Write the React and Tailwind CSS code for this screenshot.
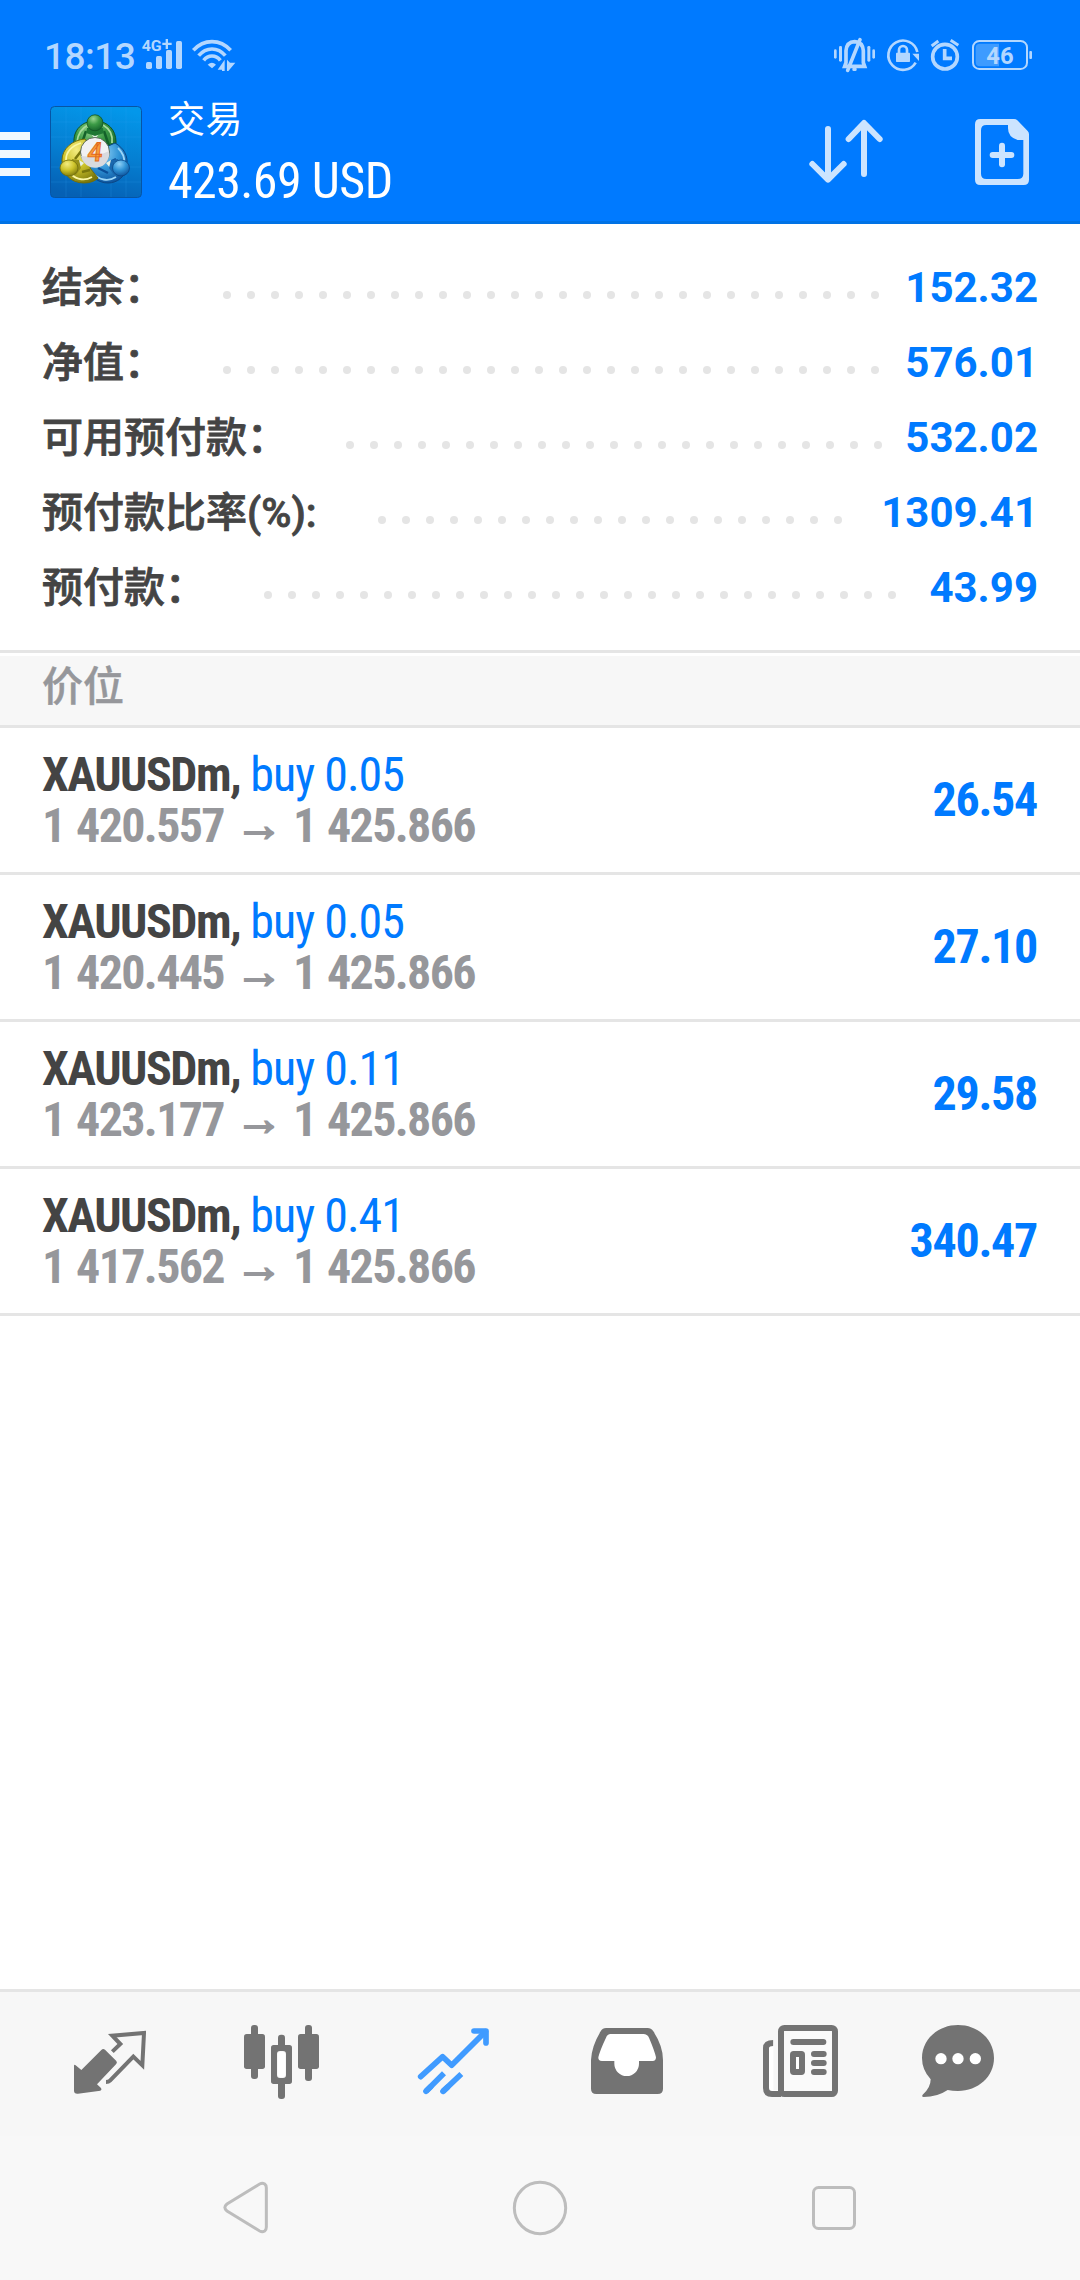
import React from 'react';

const summary = [
    { label: '结余：', value: '152.32', dots: 28, labelWidth: 'w-[181px]' },
    { label: '净值：', value: '576.01', dots: 28, labelWidth: 'w-[181px]' },
    { label: '可用预付款：', value: '532.02', dots: 23, labelWidth: 'w-[304px]' },
    { label: '预付款比率(%):', value: '1309.41', dots: 20, labelWidth: 'w-[336px]' },
    { label: '预付款：', value: '43.99', dots: 27, labelWidth: 'w-[222px]' },
];

const positions = [
    { symbol: 'XAUUSDm', side: 'buy 0.05', open: '1 420.557', current: '1 425.866', profit: '26.54' },
    { symbol: 'XAUUSDm', side: 'buy 0.05', open: '1 420.445', current: '1 425.866', profit: '27.10' },
    { symbol: 'XAUUSDm', side: 'buy 0.11', open: '1 423.177', current: '1 425.866', profit: '29.58' },
    { symbol: 'XAUUSDm', side: 'buy 0.41', open: '1 417.562', current: '1 425.866', profit: '340.47' },
];

// --- Status bar ---
const SignalIcons = () => (
    <svg className="ml-[3px] h-9 w-[97px] shrink-0" viewBox="420 51 291 108" fill="#b3d7ff">
        <text x="425" y="93" fontSize="46" fontWeight="700" fontFamily="Roboto, sans-serif" textLength="60" lengthAdjust="spacingAndGlyphs">4G</text>
        <path d="M487 68h10v-11h7v11h11v7h-11v12h-7v-12h-10z" />
        <rect x="438" y="126" width="18" height="21" rx="5" />
        <rect x="468" y="108" width="18" height="39" rx="5" />
        <rect x="498" y="90" width="18" height="57" rx="5" />
        <rect x="528" y="63" width="18" height="84" rx="5" />
        <g fill="none" stroke="#b3d7ff" strokeWidth="11">
            <path d="M580 91Q604 65 636 65T692 91" />
            <path d="M596 107Q613 87 636 87T676 107" />
            <path d="M611 121Q621 108 636 108T661 121" />
        </g>
        <path d="M623 134Q636 122 648 134L636 145Z" />
        <path d="M653 149L674 119V153H666V149ZM681 119L690 128H706L685 153H681Z" />
    </svg>
);

const SystemIcons = () => (
    <svg className="mr-[47px] ml-auto h-9 w-[200px] shrink-0" viewBox="159 51 600 108" fill="#b3d7ff">
        {/* vibrate / muted bell */}
        <rect x="162" y="88" width="8" height="28" rx="4" />
        <rect x="177" y="78" width="9" height="47" rx="4" />
        <rect x="262" y="78" width="9" height="47" rx="4" />
        <rect x="277" y="88" width="8" height="28" rx="4" />
        <g fill="none" stroke="#b3d7ff" strokeWidth="11">
            <path d="M194 139L198 128V92Q200 66 224 65Q248 66 250 92V128L254 139Z" />
            <path d="M240 59L203 151" strokeLinecap="round" />
        </g>
        <rect x="217" y="143" width="13" height="10" rx="4" />
        {/* rotation lock */}
        <g fill="none" stroke="#b3d7ff" strokeWidth="8">
            <path d="M407 128A44 44 0 1 1 412 96" />
            <path d="M357 100V90a12 12 0 0 1 24 0V100" />
        </g>
        <rect x="348" y="98" width="42" height="28" rx="2" />
        <path d="M397 101L417 101V123Z" />
        {/* alarm */}
        <g fill="none" stroke="#b3d7ff" strokeWidth="11">
            <circle cx="495" cy="110" r="37" />
            <path d="M494 87V115H516" />
            <path d="M455 78L475 63M535 76L512 61" strokeWidth="9" />
        </g>
        {/* battery */}
        <rect x="579" y="63" width="162" height="84" rx="19" fill="none" stroke="#b3d7ff" strokeWidth="6" />
        <path d="M600 71H657V139H600Q587 139 587 126V84Q587 71 600 71Z" fill="#3d9bff" />
        <rect x="748" y="93" width="8" height="24" rx="3" />
        <text x="619" y="132" fontSize="69" fontWeight="700" fontFamily="Roboto, sans-serif" textLength="82" lengthAdjust="spacingAndGlyphs">46</text>
    </svg>
);

const StatusBar = () => (
    <div className="flex h-[90px] items-start pt-[37px]">
        <span className="mt-[2px] w-[137px] shrink-0 pl-[44px] text-[37px] leading-9 font-medium tracking-[-0.5px] text-[#b3d7ff]">18:13</span>
        <SignalIcons />
        <SystemIcons />
    </div>
);

// --- Header ---
const AppLogo = () => (
    <svg className="mt-4 ml-5 size-[92px] shrink-0" viewBox="0 0 92 92">
        <defs>
            <linearGradient id="logo-bg" x1="0.6" y1="0" x2="0.4" y2="1">
                <stop offset="0" stopColor="#0397ea" />
                <stop offset="0.5" stopColor="#057fd2" />
                <stop offset="1" stopColor="#0560b4" />
            </linearGradient>
            <radialGradient id="logo-green" cx="0.4" cy="0.25" r="0.8">
                <stop offset="0" stopColor="#9ad690" />
                <stop offset="0.45" stopColor="#3c9b46" />
                <stop offset="1" stopColor="#14612a" />
            </radialGradient>
            <radialGradient id="logo-yellow" cx="0.4" cy="0.25" r="0.8">
                <stop offset="0" stopColor="#f3ec80" />
                <stop offset="0.5" stopColor="#cdc32a" />
                <stop offset="1" stopColor="#79760c" />
            </radialGradient>
            <radialGradient id="logo-blue" cx="0.4" cy="0.25" r="0.8">
                <stop offset="0" stopColor="#8fd0f6" />
                <stop offset="0.5" stopColor="#2f93d6" />
                <stop offset="1" stopColor="#0c4f99" />
            </radialGradient>
        </defs>
        <rect x="0.5" y="0.5" width="91" height="91" rx="4" fill="url(#logo-bg)" stroke="#0655a5" />
        <path d="M16 1V91M31 1V91M61 1V91M76 1V91M1 16H91M1 31H91M1 61H91M1 76H91" stroke="#36a6ee" strokeOpacity="0.2" />
        {/* three figures holding each other in a ring */}
        <path d="M24 37C23 24 32 15 45 15S66 24 66 36C66 43 63 48 58 51L45 46L30 44Q24 42 24 37Z" fill="url(#logo-green)" stroke="#115424" />
        <path d="M27 36C28 27 32 22 38 19M53 19C60 23 63 29 62 37" fill="none" stroke="#a9dc9d" strokeWidth="1.800" />
        <path d="M36 25L31 40M54 25L59 40" fill="none" stroke="#14612a" strokeWidth="2.500" />
        <path d="M65 37C74 42 78 50 77 59C76 71 67 77 58 77C48 77 40 70 37 62L45 46Z" fill="url(#logo-blue)" stroke="#0b4786" />
        <path d="M68 42C73 47 75 52 74 57M43 67C49 74 58 76 66 71" fill="none" stroke="#9bd6f8" strokeWidth="1.800" />
        <path d="M62 55L66 53M58 67L48 62" fill="none" stroke="#0c4f99" strokeWidth="2.500" />
        <path d="M35 33C22 34 12 43 12 54C12 68 21 77 34 77C40 77 45 75 48 72L40 62L45 46Z" fill="url(#logo-yellow)" stroke="#716d0b" />
        <path d="M31 37C22 40 16 46 16 54M21 68C27 74 35 75 42 71" fill="none" stroke="#fbf7a5" strokeWidth="1.800" />
        <path d="M25 53L32 44M32 66L40 64" fill="none" stroke="#79760c" strokeWidth="2.500" />
        <path d="M41 28L45 33L49 28L45 25ZM29 54L34 57L29 62ZM61 54L56 57L61 63Z" fill="#e6f1e6" />
        <path d="M37 22H53L54 27L45 30L36 27Z" fill="#1f7733" />
        <path d="M22 53L29 54L31 62L26 69L20 67Z" fill="#98921a" />
        <path d="M68 53L61 54L59 62L64 69L70 67Z" fill="#1a68ae" />
        <circle cx="45" cy="16.800" r="8" fill="url(#logo-green)" stroke="#115424" strokeWidth="0.8" />
        <ellipse cx="19" cy="62" rx="9" ry="8" fill="url(#logo-yellow)" stroke="#716d0b" strokeWidth="0.8" />
        <ellipse cx="71" cy="62" rx="8.500" ry="8" fill="url(#logo-blue)" stroke="#0b4786" strokeWidth="0.8" />
        <circle cx="45" cy="46" r="14.500" fill="#f1f1f3" stroke="#3b4c3a" strokeWidth="0.8" />
        <path d="M31 50Q45 52 59 45A14 14 0 0 1 31 50Z" fill="#d9dade" />
        <text x="50" y="55.500" textAnchor="middle" fontSize="26" fontWeight="600" fontFamily="Roboto, sans-serif" fill="#f9a03a" stroke="#e2661c" strokeWidth="0.9" transform="skewX(-6)">4</text>
    </svg>
);

const Header = () => (
    <header className="h-[224px] border-b-3 border-[#0072e5] bg-[#007aff]">
        <StatusBar />
        <div className="flex items-start">
            <div className="mt-[42px] flex w-[30px] flex-col gap-[10px]">
                <span className="h-2 bg-[#f0f8ff]" />
                <span className="h-2 bg-[#f0f8ff]" />
                <span className="h-2 bg-[#f0f8ff]" />
            </div>
            <AppLogo />
            <div className="ml-[26px] flex flex-col whitespace-nowrap text-white">
                <span className="font-['Noto_Sans_CJK_SC',sans-serif] text-[37px] leading-[54px] tracking-[0.6px]">交易</span>
                <span className="mt-[7px] font-['Roboto_Condensed',Roboto,sans-serif] text-[50px] leading-[60px] font-[450] tracking-[-0.6px]">423.69 USD</span>
            </div>
            <svg className="mt-[27px] ml-auto h-[70px] w-20 shrink-0" viewBox="81 291 240 210" fill="none" stroke="#cce4ff" strokeWidth="18" strokeLinecap="round" strokeLinejoin="round">
                <path d="M144 327V478M97 432L144 479L191 432" />
                <path d="M252 462V311M206 357L252 309L299 357" />
            </svg>
            <svg className="mt-[27px] mr-[47px] ml-[86px] h-[70px] w-[60px] shrink-0" viewBox="579 291 180 210" fill="#cce4ff">
                <path fillRule="evenodd" d="M601 297H702Q708 297 712 301L743 333Q747 337 747 343V479Q747 495 731 495H601Q585 495 585 479V313Q585 297 601 297ZM684 315H619Q603 315 603 331V461Q603 477 619 477H713Q730 477 730 461V360H713Q684 352 684 325Z" />
                <rect x="629" y="396" width="74" height="18" rx="9" />
                <rect x="657" y="368" width="18" height="74" rx="9" />
            </svg>
        </div>
    </header>
);

// --- Account summary ---
const SummaryRow = ({ label, value, dots, labelWidth }) => (
    <div className="flex h-[75px] items-center">
        <span className={`${labelWidth} shrink-0 pt-px font-medium whitespace-nowrap text-[41px] leading-[60px] text-[#444] [-webkit-text-stroke:0.8px_#444]`}>{label}</span>
        <div className="mt-[15px] flex gap-4">
            {Array.from({ length: dots }, (_, i) => (
                <span key={i} className="size-2 rounded-full bg-[#e5e5e5]" />
            ))}
        </div>
        <span className="ml-auto text-[42px] leading-[60px] font-bold text-[#007aff]">{value}</span>
    </div>
);

// --- Open positions ---
const PositionRow = ({ symbol, side, open, current, profit }) => (
    <div className="flex h-[147px] items-start justify-between border-b-3 border-[#e5e5e5] pt-[21px] pr-[43px] pl-[42px] font-['Roboto_Condensed',Roboto,sans-serif] whitespace-nowrap">
        <div className="text-[48px] leading-[51px]">
            <p className="flex">
                <span className="font-bold tracking-[-1.5px] text-[#444]">{symbol},</span>
                <span className="ml-[10px] font-[450] tracking-[-1px] text-[#007aff]">{side}</span>
            </p>
            <p className="flex font-bold tracking-[-1.65px] text-[#96979b] [word-spacing:2px]">
                <span>{open}</span>
                <span className="-mt-[3px] ml-[11px] w-[58px] font-['Noto_Sans',sans-serif] [-webkit-text-stroke:1.8px_#96979b]">→</span>
                <span>{current}</span>
            </p>
        </div>
        <span className="mt-[21px] text-[48px] leading-[60px] font-bold tracking-[-1.3px] text-[#007aff]">{profit}</span>
    </div>
);

// --- Bottom tabs ---
const TabBar = () => (
    <nav className="flex h-[147px] items-start border-t-3 border-[#e5e5e5] bg-[#f7f7f7] pt-[30px] pl-[74px] text-[#737373]">
        {/* quotes */}
        <svg className="h-[78px] w-[72px]" viewBox="222 156 216 234">
            <path d="M222 288Q222 281 227 286L244 300L304 240Q309 235 315 239L349 273Q353 278 348 283L291 343L303 354Q307 359 301 362L234 371Q222 372 222 362Z" fill="currentColor" />
            <path d="M337 245L361 222L337 197L432 189L427 286L400 260L330 332Q326 336 318 336" fill="none" stroke="currentColor" strokeWidth="12" />
        </svg>
        {/* charts */}
        <svg className="ml-[98px] h-[78px] w-[75px]" viewBox="732 156 225 234" fill="currentColor">
            <rect x="753" y="165" width="21" height="162" rx="9" />
            <rect x="732" y="192" width="63" height="105" rx="8" />
            <rect x="834" y="194" width="21" height="48" rx="9" />
            <rect x="834" y="330" width="21" height="57" rx="9" />
            <path fillRule="evenodd" d="M821 225H868Q876 225 876 233V334Q876 342 868 342H821Q813 342 813 334V233Q813 225 821 225ZM840 243Q831 243 831 252V315Q831 324 840 324H849Q858 324 858 315V252Q858 243 849 243Z" />
            <rect x="834" y="246" width="21" height="75" rx="6" fill="#fff" />
            <rect x="915" y="165" width="21" height="168" rx="9" />
            <rect x="894" y="192" width="63" height="105" rx="8" />
        </svg>
        {/* trade (active) */}
        <svg className="ml-[98px] h-[78px] w-[73px]" viewBox="171 156 219 234" fill="none" stroke="#409bff" strokeWidth="17" strokeLinecap="round" strokeLinejoin="round">
            <path d="M182 320L248 260L275 286L376 185" />
            <path d="M342 183H378V219" />
            <path d="M198 364L212 350M249 364L262 352" />
            <path d="M198 364L252 310M249 364L304 312" strokeLinecap="butt" />
        </svg>
        {/* history */}
        <svg className="ml-[101px] h-[78px] w-[72px]" viewBox="693 156 216 234">
            <path d="M738 174H863Q873 174 880 184Q909 228 909 270V356Q909 372 893 372H709Q693 372 693 356V270Q695 228 722 184Q728 174 738 174Z" fill="currentColor" />
            <path d="M752 192H850Q862 192 867 203Q884 243 888 262Q888 273 878 273H837V281A37 37 0 0 1 763 281V273H726Q714 273 715 262Q719 243 738 203Q742 192 752 192Z" fill="#fff" />
        </svg>
        {/* news */}
        <svg className="ml-[100px] h-[78px] w-[75px]" viewBox="129 156 225 234" fill="none" stroke="currentColor" strokeWidth="18">
            <path d="M160 219Q138 219 138 234V354Q138 372 156 372H183" fill="#fff" />
            <path d="M167 200V360" stroke="#f7f7f7" strokeWidth="14" />
            <rect x="183" y="174" width="162" height="198" rx="10" fill="#fafafa" />
            <path d="M220 216H310M282 252H311M282 279H311M282 306H311" strokeLinecap="round" />
            <rect x="219" y="252" width="27" height="54" rx="2" fill="#fff" />
        </svg>
        {/* messages */}
        <svg className="ml-[84px] h-[78px] w-[72px]" viewBox="606 156 216 234">
            <path d="M714 165C774 165 822 208 822 264S774 363 714 363Q697 363 683 360Q652 381 611 381Q604 380 608 374Q632 354 632 328Q606 300 606 264C606 208 654 165 714 165Z" fill="currentColor" />
            <circle cx="663" cy="266" r="17" fill="#fff" />
            <circle cx="714" cy="266" r="17" fill="#fff" />
            <circle cx="766" cy="266" r="17" fill="#fff" />
        </svg>
    </nav>
);

const SystemNav = () => (
    <div className="flex h-36 items-start bg-[#f8f8f8] pt-11 pl-[222px]">
        <svg className="h-14 w-[47px]" viewBox="666 630 141 168" fill="none" stroke="#bdbdbd" strokeWidth="9">
            <path d="M779 642Q787 638 794 642Q799 646 799 653V772Q799 779 794 783Q787 787 779 783L681 723Q668 713 681 702Z" />
        </svg>
        <svg className="ml-[243px] h-14 w-14" viewBox="456 630 168 168" fill="none" stroke="#bdbdbd" strokeWidth="9">
            <circle cx="540" cy="714" r="77" />
        </svg>
        <svg className="ml-[243px] h-14 w-[46px]" viewBox="273 630 138 168" fill="none" stroke="#bdbdbd" strokeWidth="9">
            <rect x="280.500" y="652.500" width="123" height="123" rx="15" />
        </svg>
    </div>
);

export default function App() {
    return (
        <div lang="zh-CN" className="flex h-[2280px] w-[1080px] flex-col overflow-hidden bg-white font-['Roboto','Noto_Sans_CJK_SC',sans-serif]">
            <Header />
            <section className="border-b-3 border-[#e5e5e5] pt-[26px] pr-[42px] pb-[25px] pl-[42px]">
                {summary.map((row) => <SummaryRow key={row.label} {...row} />)}
            </section>
            <h2 className="mt-[3px] h-[72px] border-b-3 border-[#e5e5e5] bg-[#f7f7f7] pl-[42px] text-[41px] leading-[62px] font-medium text-[#96979b] [-webkit-text-stroke:0.5px_#96979b]">价位</h2>
            <main className="flex-1">
                {positions.map((row) => <PositionRow key={row.open} {...row} />)}
            </main>
            <TabBar />
            <SystemNav />
        </div>
    );
}
